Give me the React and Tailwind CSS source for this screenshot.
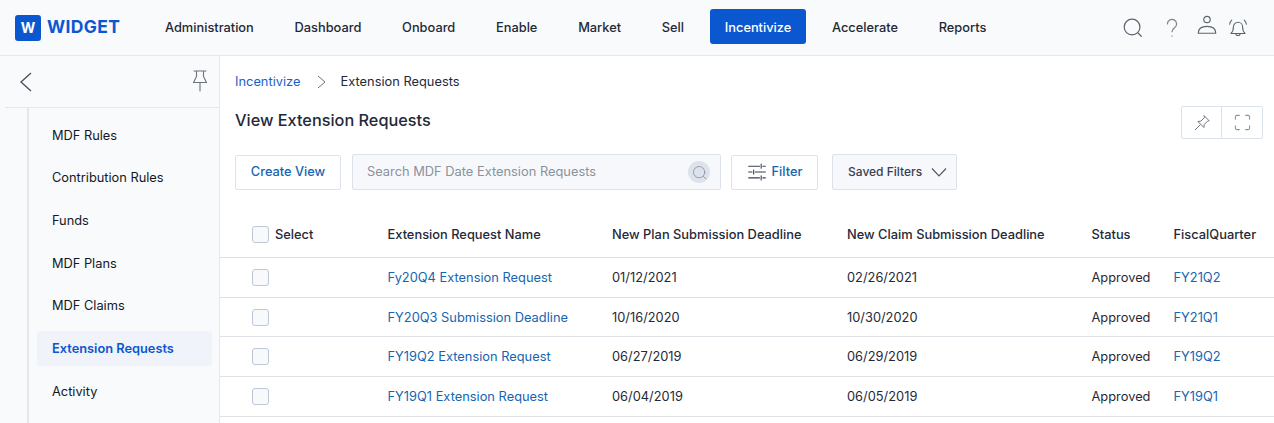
import React from 'react';

const navItems = ['Administration', 'Dashboard', 'Onboard', 'Enable', 'Market', 'Sell', 'Incentivize', 'Accelerate', 'Reports'];
const sideItems = ['MDF Rules', 'Contribution Rules', 'Funds', 'MDF Plans', 'MDF Claims', 'Extension Requests', 'Activity'];
const rows = [
  ['Fy20Q4 Extension Request', '01/12/2021', '02/26/2021', 'Approved', 'FY21Q2'],
  ['FY20Q3 Submission Deadline', '10/16/2020', '10/30/2020', 'Approved', 'FY21Q1'],
  ['FY19Q2 Extension Request', '06/27/2019', '06/29/2019', 'Approved', 'FY19Q2'],
  ['FY19Q1 Extension Request', '06/04/2019', '06/05/2019', 'Approved', 'FY19Q1'],
];

const gridCols = 'grid grid-cols-[167.5px_224.5px_235px_244.5px_82px_1fr] items-center';

function Checkbox() {
  return <div className="w-[15px] h-[15px] box-content rounded-[3px] border border-[#bcc8d8] bg-[#f8f9fb]" />;
}

function Icon({ className, children }) {
  return (
    <svg className={className} viewBox="0 0 24 24" fill="none" stroke="currentColor" strokeWidth="1.3" strokeLinecap="round" strokeLinejoin="round">
      {children}
    </svg>
  );
}

function Header() {
  return (
    <header className="h-[56px] shrink-0 flex items-center bg-[#f9fafb] border-b border-[#e5e7eb]">
      <div className="w-[150.6px] pl-[15px] shrink-0 flex items-center gap-[6px]">
        <div className="w-[26px] h-[26px] rounded-[3px] bg-[#0b57d0] text-white text-[14px] font-bold flex items-center justify-center">W</div>
        <span className="text-[#0b57d0] text-[17.5px] font-bold tracking-[0.35px]">WIDGET</span>
      </div>
      <nav className="-mt-[2px] flex items-center gap-3 text-[12.8px] font-medium text-[#1f2937]">
        {navItems.map((item) => (
          <span key={item} className={`h-[35px] pt-[2px] px-[14.4px] flex items-center rounded-[3px] ${item === 'Incentivize' ? 'bg-[#0b57d0] text-white' : ''}`}>
            {item}
          </span>
        ))}
      </nav>
      <div className="ml-auto flex items-center text-[#5b6570] pr-[26px]">
        <Icon className="w-[22px] h-[22px]">
          <circle cx="11" cy="11" r="8.6" />
          <path d="M17.500 17.500 21 21" />
        </Icon>
        <Icon className="w-[22px] h-[22px] ml-[17px] text-[#7a838c]">
          <path d="M7 7.500a5 5 0 1 1 7.800 4.200c-1.800 1.200-2.800 2.300-2.800 4.300" />
          <path d="M12 20.500v.3" />
        </Icon>
        <Icon className="w-[22px] h-[22px] ml-[13px] -translate-y-[3px]">
          <circle cx="12" cy="6" r="3.500" />
          <path d="M2.500 21c0-5 4-7.500 9.500-7.500s9.500 2.500 9.500 7.500z" />
        </Icon>
        <Icon className="w-[20px] h-[20px] ml-[10px]">
          <path d="M3.500 18.500c2.500-2 3-4.500 3-8a5.500 5.500 0 0 1 11 0c0 3.500.5 6 3 8z" />
          <path d="M9.500 18.500a2.500 2.500 0 0 0 5 0" />
          <path d="M4.500 2.500C3 4 2.200 5.500 2 7.500M19.500 2.500c1.500 1.500 2.300 3 2.500 5" />
        </Icon>
      </div>
    </header>
  );
}

function Sidebar() {
  return (
    <aside className="w-[220px] shrink-0 bg-[#f9fafb] border-r border-[#e5e7eb] flex flex-col overflow-hidden">
      <div className="h-[52px] shrink-0 ml-[5px] flex items-center justify-between pl-[14px] pr-[11px] border-b border-[#e5e7eb]">
        <svg className="w-[14px] h-[22px] text-[#4b5563]" viewBox="0 0 14 22" fill="none" stroke="currentColor" strokeWidth="1.400">
          <path d="M12 2 2 11l10 9" />
        </svg>
        <svg className="w-[16px] h-[22px] text-[#6b7280] -translate-y-[1px]" viewBox="0 0 16 22" fill="none" stroke="currentColor" strokeWidth="1.100" strokeLinecap="round" strokeLinejoin="round">
          <path d="M2 1h12M4.500 1v5.500L1.500 12.500h13l-3-6V1M8 12.500V21" />
        </svg>
      </div>
      <div className="ml-[27px] flex-1 border-l-2 border-[#e5e7eb] pt-[9.5px] pl-[8px] pr-[7px] flex flex-col gap-[7px]">
        {sideItems.map((item) => (
          <div
            key={item}
            className={`h-[35.67px] shrink-0 flex items-center pl-[15px] rounded-[4px] text-[12.8px] ${
              item === 'Extension Requests' ? 'bg-[#f0f3f9] text-[#0b57d0] font-semibold' : 'text-[#111827]'
            }`}
          >
            {item}
          </div>
        ))}
      </div>
    </aside>
  );
}

function Toolbar() {
  return (
    <div className="flex items-center mt-[14px] pl-[15px] h-[36px]">
      <button className="w-[106px] h-[35px] rounded-[2px] border border-[#dde3ec] bg-white text-[12.8px] font-medium text-[#1565b0]">Create View</button>
      <div className="ml-[11px] w-[369px] h-[36px] rounded-[2px] border border-[#dde3ec] bg-[#f7f8fb] flex items-center pl-[14px] pr-[10px]">
        <span className="flex-1 text-[12.85px] text-[#8a929c]">Search MDF Date Extension Requests</span>
        <div className="w-[22px] h-[22px] rounded-full bg-[#dde3ec] flex items-center justify-center text-[#8f99a5]">
          <Icon className="w-[17px] h-[17px]">
            <circle cx="11.500" cy="11.500" r="8" />
            <path d="M17.500 17.500 21 21" />
          </Icon>
        </div>
      </div>
      <button className="ml-[10px] w-[87px] h-[35px] rounded-[2px] border border-[#dde3ec] bg-white flex items-center justify-center gap-[5px] text-[12.8px] font-medium text-[#1565b0]">
        <Icon className="w-[20px] h-[20px] text-[#374151]">
          <path d="M2 5h13M19 5h3M17 2.500v5M2 12h4M10 12h12M8 9.500v5M2 19h13M19 19h3M17 16.500v5" />
        </Icon>
        Filter
      </button>
      <button className="ml-[14px] w-[125px] h-[36px] rounded-[2px] border border-[#dde3ec] bg-[#f7f8fb] flex items-center pl-[15px] gap-[9px] text-[12px] font-medium text-[#374151]">
        Saved Filters
        <svg className="w-[16px] h-[10px] text-[#4b5563]" viewBox="0 0 16 10" fill="none" stroke="currentColor" strokeWidth="1.100">
          <path d="M1 1.500 8 9l7-7.500" />
        </svg>
      </button>
    </div>
  );
}

function Table() {
  return (
    <div className="mt-[23px] text-[12.85px]">
      <div className={`${gridCols} h-[45.3px] pb-[2px] border-b border-[#dfe3e8] font-medium text-[#1f2937]`}>
        <div className="pl-[32px] flex items-center gap-[6px]">
          <Checkbox />
          Select
        </div>
        <div>Extension Request Name</div>
        <div>New Plan Submission Deadline</div>
        <div>New Claim Submission Deadline</div>
        <div>Status</div>
        <div>FiscalQuarter</div>
      </div>
      {rows.map((row) => (
        <div key={row[0]} className={`${gridCols} h-[39.6px] border-b border-[#dfe3e8] text-[#1f2937]`}>
          <div className="pl-[32px]">
            <Checkbox />
          </div>
          <div className="text-[#1565b0]">{row[0]}</div>
          <div>{row[1]}</div>
          <div>{row[2]}</div>
          <div>{row[3]}</div>
          <div className="text-[#1565b0]">{row[4]}</div>
        </div>
      ))}
    </div>
  );
}

export default function App() {
  return (
    <div className="w-[1274px] h-[423px] overflow-hidden flex flex-col bg-white font-['Inter',sans-serif]">
      <Header />
      <div className="flex flex-1 min-h-0">
        <Sidebar />
        <main className="flex-1 min-w-0 pt-[17px]">
          <div className="flex items-center h-[18px] pl-[15px] text-[12.85px]">
            <span className="text-[#1a5fc8]">Incentivize</span>
            <svg className="w-[9px] h-[14px] ml-[16px] mr-[15px] text-[#6b7280]" viewBox="0 0 9 14" fill="none" stroke="currentColor" strokeWidth="1">
              <path d="M1 1l7 6-7 6" />
            </svg>
            <span className="text-[#1f2937]">Extension Requests</span>
          </div>
          <div className="flex items-start justify-between mt-[15px] pl-[15px] pr-[11px] h-[34px]">
            <h1 className="text-[16.3px] font-medium text-[#1f2937] mt-[2px]">View Extension Requests</h1>
            <div className="flex h-[33px] border border-[#dde3ec] rounded-[2px]">
              <div className="w-[40px] flex items-center justify-center border-r border-[#dde3ec] text-[#6b7280]">
                <Icon className="w-[18px] h-[18px]">
                  <path d="M15 2.500 21.500 9l-2 .5-4.500 4.500-.5 4-8-8 4-.5L15 5z" />
                  <path d="M9.500 14.500 3 21" />
                </Icon>
              </div>
              <div className="w-[40px] flex items-center justify-center text-[#8a929c]">
                <Icon className="w-[19px] h-[19px]">
                  <path d="M3 8V5a2 2 0 0 1 2-2h3M16 3h3a2 2 0 0 1 2 2v3M21 16v3a2 2 0 0 1-2 2h-3M8 21H5a2 2 0 0 1-2-2v-3" />
                </Icon>
              </div>
            </div>
          </div>
          <Toolbar />
          <Table />
        </main>
      </div>
    </div>
  );
}
